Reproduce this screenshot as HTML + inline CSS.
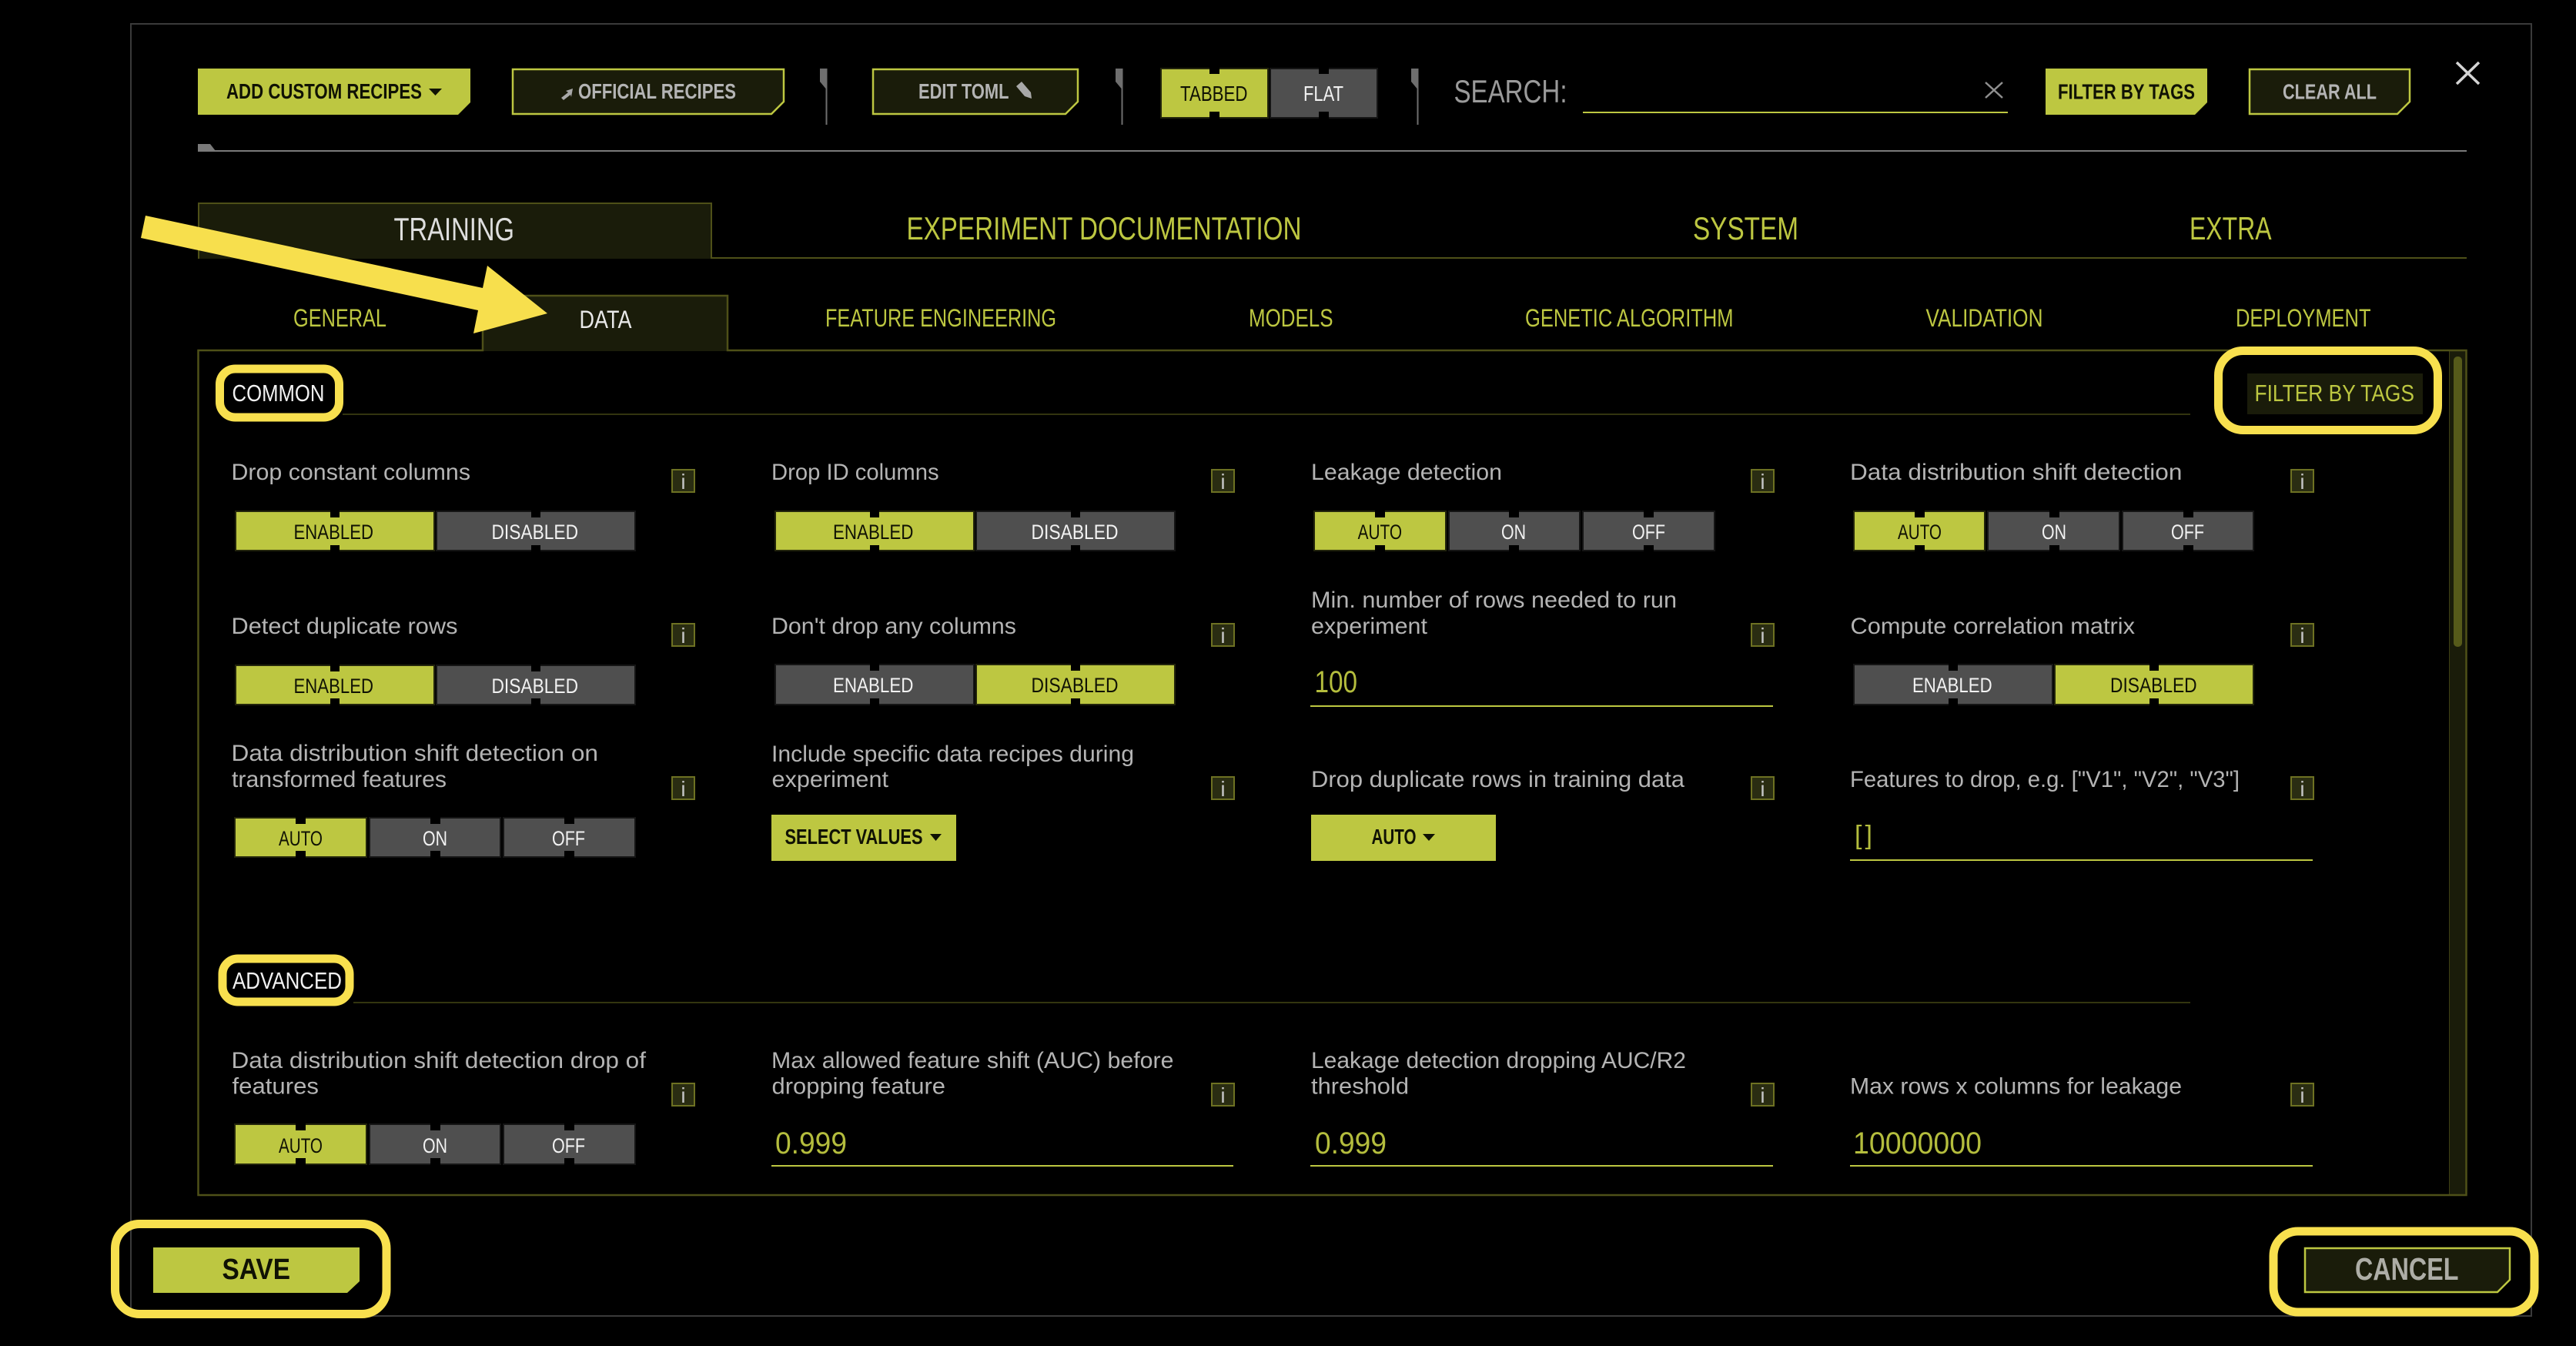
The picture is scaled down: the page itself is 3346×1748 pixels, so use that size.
<!DOCTYPE html>
<html lang="en">
<head>
<meta charset="utf-8">
<title>Expert Settings</title>
<style>
html,body{margin:0;padding:0;background:#000;width:3346px;height:1748px;overflow:hidden}
svg{display:block}
text{font-family:"Liberation Sans",sans-serif;white-space:pre}
.l{font-size:30px;fill:#b4b4b4}
.t{font-size:26.5px}
.k{fill:#101204}
.w{fill:#f2f2f2}
.g{fill:#bdc741}
.b{font-size:27.5px;font-weight:700}
.tab{font-size:42px}
.sub{font-size:32px}
.v{font-size:40px;fill:#b4bd3d}
.i{font-size:28px;fill:#c4c4c4;text-anchor:middle}
.on{fill:#bdc741;stroke:#23250c;stroke-width:2}
.off{fill:#4f4f4f;stroke:#151515;stroke-width:2}
.n{fill:#000}
.info{fill:#2a2d12;stroke:#6d7122;stroke-width:2}
.hl{fill:none;stroke:#f8e04e;stroke-width:11}
.ul{fill:#bdc741}
</style>
</head>
<body>
<svg width="3346" height="1748" viewBox="0 0 3346 1748" xmlns="http://www.w3.org/2000/svg">
<rect width="3346" height="1748" fill="#000"/>
<!-- outer frame -->
<rect x="170" y="31" width="3118" height="1678" fill="none" stroke="#3a3a3a" stroke-width="2"/>

<!-- toolbar -->
<polygon points="257,89 611,89 611,133 595,149 257,149" fill="#bdc741"/>
<text class="b k" x="294" y="128" textLength="254" lengthAdjust="spacingAndGlyphs">ADD CUSTOM RECIPES</text>
<polygon points="557,115 574,115 565.500,124" fill="#101204"/>

<polygon points="666,90 1018,90 1018,132 1002,148 666,148" fill="#1a1c0a" stroke="#bdc741" stroke-width="2.500"/>
<polygon points="744,115 735,118 738,120 729,127 732,130 741,123 742,126" fill="#a8a8a8"/>
<text class="b" fill="#b4b4b4" x="751" y="128" textLength="205" lengthAdjust="spacingAndGlyphs">OFFICIAL RECIPES</text>

<polygon points="1065,89 1074.500,89 1074.500,162 1072.500,162 1072.500,115 1065,106" fill="#6e6e6e"/>

<polygon points="1134,90 1400,90 1400,132 1384,148 1134,148" fill="#1a1c0a" stroke="#bdc741" stroke-width="2.500"/>
<text class="b" fill="#b4b4b4" x="1193" y="128" textLength="117.500" lengthAdjust="spacingAndGlyphs">EDIT TOML</text>
<polygon points="1320,112 1327,106 1339,120 1340,128 1331,125" fill="#a8a8a8"/>

<polygon points="1449,89 1458.500,89 1458.500,162 1456.500,162 1456.500,115 1449,106" fill="#6e6e6e"/>

<rect class="on" x="1508" y="89" width="139" height="64"/>
<rect class="off" x="1650" y="89" width="139" height="64"/>
<rect class="n" x="1571" y="88" width="13" height="8"/>
<rect class="n" x="1571" y="145" width="13" height="9"/>
<rect class="n" x="1713" y="88" width="13" height="8"/>
<rect class="n" x="1713" y="145" width="13" height="9"/>
<text class="t k" style="font-size:27.500px" x="1533" y="131" textLength="87.500" lengthAdjust="spacingAndGlyphs">TABBED</text>
<text class="t w" style="font-size:27.500px" x="1693" y="131" textLength="52" lengthAdjust="spacingAndGlyphs">FLAT</text>

<polygon points="1833,89 1842.500,89 1842.500,162 1840.500,162 1840.500,115 1833,106" fill="#6e6e6e"/>

<text class="tab" fill="#9a9a9a" x="1888.500" y="133" textLength="147" lengthAdjust="spacingAndGlyphs">SEARCH:</text>
<rect class="ul" x="2056" y="145" width="552" height="2"/>
<path d="M2579 107 L2601 127 M2601 107 L2579 127" stroke="#8f8f8f" stroke-width="2.500" fill="none"/>

<polygon points="2657,89 2867,89 2867,133 2851,149 2657,149" fill="#bdc741"/>
<text class="b k" x="2673" y="128.500" textLength="178" lengthAdjust="spacingAndGlyphs">FILTER BY TAGS</text>

<polygon points="2922,90 3130,90 3130,132 3114,148 2922,148" fill="#1a1c0a" stroke="#bdc741" stroke-width="2.500"/>
<text class="b" fill="#b4b4b4" x="2965" y="128.500" textLength="122" lengthAdjust="spacingAndGlyphs">CLEAR ALL</text>

<path d="M3191 81 L3220 109 M3220 81 L3191 109" stroke="#d4d4d4" stroke-width="3.500" fill="none"/>

<rect x="257" y="195" width="2947" height="2" fill="#7a7a7a"/>
<polygon points="257,187 273,187 280,196 257,196" fill="#7a7a7a"/>

<!-- main tabs -->
<rect x="258" y="264" width="666" height="72" fill="#1a1c0a"/>
<path d="M258 336 V264 H924 V335 H3204" fill="none" stroke="#4e5018" stroke-width="2"/>
<text class="tab" fill="#dedede" x="511.500" y="312" textLength="156.500" lengthAdjust="spacingAndGlyphs">TRAINING</text>
<text class="tab g" x="1177.500" y="311" textLength="513" lengthAdjust="spacingAndGlyphs">EXPERIMENT DOCUMENTATION</text>
<text class="tab g" x="2199" y="311" textLength="137" lengthAdjust="spacingAndGlyphs">SYSTEM</text>
<text class="tab g" x="2844" y="311" textLength="106.500" lengthAdjust="spacingAndGlyphs">EXTRA</text>

<!-- sub tabs -->
<rect x="627" y="384" width="318" height="72" fill="#1a1c0a"/>
<text class="sub g" x="381" y="424" textLength="121" lengthAdjust="spacingAndGlyphs">GENERAL</text>
<text class="sub" fill="#e8e8e8" x="752.500" y="426" textLength="68" lengthAdjust="spacingAndGlyphs">DATA</text>
<text class="sub g" x="1072" y="424" textLength="300" lengthAdjust="spacingAndGlyphs">FEATURE ENGINEERING</text>
<text class="sub g" x="1622" y="424" textLength="109.500" lengthAdjust="spacingAndGlyphs">MODELS</text>
<text class="sub g" x="1981" y="424" textLength="270.500" lengthAdjust="spacingAndGlyphs">GENETIC ALGORITHM</text>
<text class="sub g" x="2501.500" y="424" textLength="152" lengthAdjust="spacingAndGlyphs">VALIDATION</text>
<text class="sub g" x="2904" y="424" textLength="175.500" lengthAdjust="spacingAndGlyphs">DEPLOYMENT</text>

<!-- panel -->
<rect x="3181" y="456" width="22" height="1096" fill="#1a1c0a"/>
<rect x="3181" y="456" width="1" height="1096" fill="#3c3e14"/>
<rect x="3187" y="463" width="11" height="377" rx="5" fill="#565a1a"/>
<path d="M257.500 1552 V455 H627 V384 H945 V455 H3203.500 V1552 Z" fill="none" stroke="#4e5018" stroke-width="2.500"/>

<!-- section lines -->
<rect x="445" y="537" width="2400" height="2" fill="#33350f"/>
<rect x="459" y="1301" width="2386" height="2" fill="#33350f"/>

<text class="sub w" style="font-size:31px" x="301.500" y="521" textLength="120" lengthAdjust="spacingAndGlyphs">COMMON</text>
<text class="sub w" style="font-size:31px" x="302" y="1284" textLength="142" lengthAdjust="spacingAndGlyphs">ADVANCED</text>

<rect x="2919" y="485" width="228" height="53" fill="#1a1c0a"/>
<text class="sub g" style="font-size:31px" x="2928.500" y="521" textLength="207.500" lengthAdjust="spacingAndGlyphs">FILTER BY TAGS</text>

<!-- row 1 -->
<text class="l" x="300.500" y="623" textLength="310.500" lengthAdjust="spacingAndGlyphs">Drop constant columns</text>
<text class="l" x="1002" y="623" textLength="217.600" lengthAdjust="spacingAndGlyphs">Drop ID columns</text>
<text class="l" x="1703" y="623" textLength="248" lengthAdjust="spacingAndGlyphs">Leakage detection</text>
<text class="l" x="2403" y="623" textLength="431.400" lengthAdjust="spacingAndGlyphs">Data distribution shift detection</text>

<!-- row 1 toggles -->
<rect class="on" x="306" y="664" width="258" height="51"/><rect class="off" x="567" y="664" width="258" height="51"/>
<rect class="n" x="429" y="663" width="12" height="9"/><rect class="n" x="429" y="708" width="12" height="8"/>
<rect class="n" x="690" y="663" width="12" height="9"/><rect class="n" x="690" y="708" width="12" height="8"/>
<text class="t k" x="381.500" y="700" textLength="103.500" lengthAdjust="spacingAndGlyphs">ENABLED</text>
<text class="t w" x="638.500" y="700" textLength="112.500" lengthAdjust="spacingAndGlyphs">DISABLED</text>

<rect class="on" x="1007" y="664" width="258" height="51"/><rect class="off" x="1268" y="664" width="258" height="51"/>
<rect class="n" x="1130" y="663" width="12" height="9"/><rect class="n" x="1130" y="708" width="12" height="8"/>
<rect class="n" x="1391" y="663" width="12" height="9"/><rect class="n" x="1391" y="708" width="12" height="8"/>
<text class="t k" x="1082" y="700" textLength="104.400" lengthAdjust="spacingAndGlyphs">ENABLED</text>
<text class="t w" x="1339.500" y="700" textLength="113" lengthAdjust="spacingAndGlyphs">DISABLED</text>

<rect class="on" x="1707" y="664" width="171" height="51"/><rect class="off" x="1882" y="664" width="170" height="51"/><rect class="off" x="2056" y="664" width="171" height="51"/>
<rect class="n" x="1786" y="663" width="13" height="9"/><rect class="n" x="1786" y="708" width="13" height="8"/>
<rect class="n" x="1960" y="663" width="13" height="9"/><rect class="n" x="1960" y="708" width="13" height="8"/>
<rect class="n" x="2135" y="663" width="13" height="9"/><rect class="n" x="2135" y="708" width="13" height="8"/>
<text class="t k" x="1763.600" y="700" textLength="57.400" lengthAdjust="spacingAndGlyphs">AUTO</text>
<text class="t w" x="1950" y="700" textLength="32" lengthAdjust="spacingAndGlyphs">ON</text>
<text class="t w" x="2120" y="700" textLength="43" lengthAdjust="spacingAndGlyphs">OFF</text>

<rect class="on" x="2408" y="664" width="170" height="51"/><rect class="off" x="2582" y="664" width="171" height="51"/><rect class="off" x="2757" y="664" width="170" height="51"/>
<rect class="n" x="2487" y="663" width="13" height="9"/><rect class="n" x="2487" y="708" width="13" height="8"/>
<rect class="n" x="2662" y="663" width="13" height="9"/><rect class="n" x="2662" y="708" width="13" height="8"/>
<rect class="n" x="2836" y="663" width="13" height="9"/><rect class="n" x="2836" y="708" width="13" height="8"/>
<text class="t k" x="2465" y="700" textLength="57" lengthAdjust="spacingAndGlyphs">AUTO</text>
<text class="t w" x="2652" y="700" textLength="32" lengthAdjust="spacingAndGlyphs">ON</text>
<text class="t w" x="2820" y="700" textLength="43" lengthAdjust="spacingAndGlyphs">OFF</text>

<!-- row 2 -->
<text class="l" x="300.500" y="823" textLength="294" lengthAdjust="spacingAndGlyphs">Detect duplicate rows</text>
<text class="l" x="1002" y="823" textLength="318" lengthAdjust="spacingAndGlyphs">Don't drop any columns</text>
<text class="l" x="1703" y="789" textLength="475" lengthAdjust="spacingAndGlyphs">Min. number of rows needed to run</text>
<text class="l" x="1703" y="823" textLength="151" lengthAdjust="spacingAndGlyphs">experiment</text>
<text class="l" x="2403.500" y="823" textLength="369.500" lengthAdjust="spacingAndGlyphs">Compute correlation matrix</text>

<rect class="on" x="306" y="864" width="258" height="51"/><rect class="off" x="567" y="864" width="258" height="51"/>
<rect class="n" x="429" y="863" width="12" height="9"/><rect class="n" x="429" y="907" width="12" height="9"/>
<rect class="n" x="690" y="863" width="12" height="9"/><rect class="n" x="690" y="907" width="12" height="9"/>
<text class="t k" x="381.500" y="900" textLength="103.500" lengthAdjust="spacingAndGlyphs">ENABLED</text>
<text class="t w" x="638.500" y="900" textLength="112.500" lengthAdjust="spacingAndGlyphs">DISABLED</text>

<rect class="off" x="1007" y="863" width="258" height="52"/><rect class="on" x="1268" y="863" width="258" height="52"/>
<rect class="n" x="1130" y="862" width="12" height="9"/><rect class="n" x="1130" y="907" width="12" height="9"/>
<rect class="n" x="1391" y="862" width="12" height="9"/><rect class="n" x="1391" y="907" width="12" height="9"/>
<text class="t w" x="1082" y="899" textLength="104.400" lengthAdjust="spacingAndGlyphs">ENABLED</text>
<text class="t k" x="1339.500" y="899" textLength="113" lengthAdjust="spacingAndGlyphs">DISABLED</text>

<text class="v" x="1707.500" y="899" textLength="55.500" lengthAdjust="spacingAndGlyphs">100</text>
<rect class="ul" x="1702" y="916" width="601" height="2"/>

<rect class="off" x="2408" y="863" width="258" height="52"/><rect class="on" x="2669" y="863" width="258" height="52"/>
<rect class="n" x="2531" y="862" width="12" height="9"/><rect class="n" x="2531" y="907" width="12" height="9"/>
<rect class="n" x="2792" y="862" width="12" height="9"/><rect class="n" x="2792" y="907" width="12" height="9"/>
<text class="t w" x="2484" y="899" textLength="103.600" lengthAdjust="spacingAndGlyphs">ENABLED</text>
<text class="t k" x="2741" y="899" textLength="112.600" lengthAdjust="spacingAndGlyphs">DISABLED</text>

<!-- row 3 -->
<text class="l" x="300.500" y="988" textLength="476.500" lengthAdjust="spacingAndGlyphs">Data distribution shift detection on</text>
<text class="l" x="301" y="1022" textLength="279" lengthAdjust="spacingAndGlyphs">transformed features</text>
<text class="l" x="1002" y="989" textLength="471" lengthAdjust="spacingAndGlyphs">Include specific data recipes during</text>
<text class="l" x="1002.500" y="1022" textLength="151.500" lengthAdjust="spacingAndGlyphs">experiment</text>
<text class="l" x="1703" y="1022" textLength="485" lengthAdjust="spacingAndGlyphs">Drop duplicate rows in training data</text>
<text class="l" x="2403" y="1022" textLength="506" lengthAdjust="spacingAndGlyphs">Features to drop, e.g. ["V1", "V2", "V3"]</text>

<rect class="on" x="305" y="1062" width="171" height="51"/><rect class="off" x="480" y="1062" width="170" height="51"/><rect class="off" x="654" y="1062" width="171" height="51"/>
<rect class="n" x="384" y="1061" width="13" height="9"/><rect class="n" x="384" y="1105" width="13" height="9"/>
<rect class="n" x="559" y="1061" width="13" height="9"/><rect class="n" x="559" y="1105" width="13" height="9"/>
<rect class="n" x="733" y="1061" width="13" height="9"/><rect class="n" x="733" y="1105" width="13" height="9"/>
<text class="t k" x="362" y="1098" textLength="57" lengthAdjust="spacingAndGlyphs">AUTO</text>
<text class="t w" x="549" y="1098" textLength="32" lengthAdjust="spacingAndGlyphs">ON</text>
<text class="t w" x="717" y="1098" textLength="43" lengthAdjust="spacingAndGlyphs">OFF</text>

<rect x="1002" y="1058" width="240" height="60" fill="#bdc741"/>
<text class="b k" x="1019.500" y="1096" textLength="179" lengthAdjust="spacingAndGlyphs">SELECT VALUES</text>
<polygon points="1208,1083 1223,1083 1215.500,1092" fill="#101204"/>
<rect x="1703" y="1058" width="240" height="60" fill="#bdc741"/>
<text class="b k" x="1781.500" y="1096" textLength="58" lengthAdjust="spacingAndGlyphs">AUTO</text>
<polygon points="1848,1083 1864,1083 1856,1092" fill="#101204"/>

<text class="v" style="font-size:34px" x="2409" y="1096" textLength="23" lengthAdjust="spacing">[]</text>
<rect class="ul" x="2403" y="1116" width="601" height="2"/>

<!-- advanced row -->
<text class="l" x="300.500" y="1387" textLength="538.500" lengthAdjust="spacingAndGlyphs">Data distribution shift detection drop of</text>
<text class="l" x="301.500" y="1420.700" textLength="112.500" lengthAdjust="spacingAndGlyphs">features</text>
<text class="l" x="1002" y="1387" textLength="522.500" lengthAdjust="spacingAndGlyphs">Max allowed feature shift (AUC) before</text>
<text class="l" x="1002.500" y="1420.700" textLength="225.500" lengthAdjust="spacingAndGlyphs">dropping feature</text>
<text class="l" x="1703" y="1387" textLength="487" lengthAdjust="spacingAndGlyphs">Leakage detection dropping AUC/R2</text>
<text class="l" x="1703" y="1420.700" textLength="127" lengthAdjust="spacingAndGlyphs">threshold</text>
<text class="l" x="2403" y="1420.700" textLength="431" lengthAdjust="spacingAndGlyphs">Max rows x columns for leakage</text>

<rect class="on" x="305" y="1460" width="171" height="52"/><rect class="off" x="480" y="1460" width="170" height="52"/><rect class="off" x="654" y="1460" width="171" height="52"/>
<rect class="n" x="384" y="1459" width="13" height="9"/><rect class="n" x="384" y="1504" width="13" height="9"/>
<rect class="n" x="559" y="1459" width="13" height="9"/><rect class="n" x="559" y="1504" width="13" height="9"/>
<rect class="n" x="733" y="1459" width="13" height="9"/><rect class="n" x="733" y="1504" width="13" height="9"/>
<text class="t k" x="362" y="1497" textLength="57" lengthAdjust="spacingAndGlyphs">AUTO</text>
<text class="t w" x="549" y="1497" textLength="32" lengthAdjust="spacingAndGlyphs">ON</text>
<text class="t w" x="717" y="1497" textLength="43" lengthAdjust="spacingAndGlyphs">OFF</text>

<text class="v" x="1007" y="1498" textLength="93" lengthAdjust="spacingAndGlyphs">0.999</text>
<rect class="ul" x="1002" y="1513" width="600" height="2"/>
<text class="v" x="1708" y="1498" textLength="93" lengthAdjust="spacingAndGlyphs">0.999</text>
<rect class="ul" x="1702" y="1513" width="601" height="2"/>
<text class="v" x="2407" y="1498" textLength="167" lengthAdjust="spacingAndGlyphs">10000000</text>
<rect class="ul" x="2403" y="1513" width="601" height="2"/>

<!-- info icons -->
<rect class="info" x="873" y="610" width="29" height="29"/><text class="i" x="887.500" y="635">i</text>
<rect class="info" x="1574" y="610" width="29" height="29"/><text class="i" x="1588.500" y="635">i</text>
<rect class="info" x="2275" y="610" width="29" height="29"/><text class="i" x="2289.500" y="635">i</text>
<rect class="info" x="2976" y="610" width="29" height="29"/><text class="i" x="2990.500" y="635">i</text>
<rect class="info" x="873" y="810" width="29" height="29"/><text class="i" x="887.500" y="835">i</text>
<rect class="info" x="1574" y="810" width="29" height="29"/><text class="i" x="1588.500" y="835">i</text>
<rect class="info" x="2275" y="810" width="29" height="29"/><text class="i" x="2289.500" y="835">i</text>
<rect class="info" x="2976" y="810" width="29" height="29"/><text class="i" x="2990.500" y="835">i</text>
<rect class="info" x="873" y="1009" width="29" height="29"/><text class="i" x="887.500" y="1034">i</text>
<rect class="info" x="1574" y="1009" width="29" height="29"/><text class="i" x="1588.500" y="1034">i</text>
<rect class="info" x="2275" y="1009" width="29" height="29"/><text class="i" x="2289.500" y="1034">i</text>
<rect class="info" x="2976" y="1009" width="29" height="29"/><text class="i" x="2990.500" y="1034">i</text>
<rect class="info" x="873" y="1407" width="29" height="29"/><text class="i" x="887.500" y="1432">i</text>
<rect class="info" x="1574" y="1407" width="29" height="29"/><text class="i" x="1588.500" y="1432">i</text>
<rect class="info" x="2275" y="1407" width="29" height="29"/><text class="i" x="2289.500" y="1432">i</text>
<rect class="info" x="2976" y="1407" width="29" height="29"/><text class="i" x="2990.500" y="1432">i</text>

<!-- save / cancel -->
<polygon points="199,1620 467,1620 467,1664 451,1679 199,1679" fill="#bdc741"/>
<text class="k" style="font-size:38px;font-weight:700" x="288.500" y="1661" textLength="88.500" lengthAdjust="spacingAndGlyphs">SAVE</text>
<polygon points="2994,1621 3260,1621 3260,1662 3244,1678 2994,1678" fill="#1a1c0a" stroke="#bdc741" stroke-width="2.500"/>
<text fill="#adada6" style="font-size:41px;font-weight:700" x="3059" y="1662" textLength="134.500" lengthAdjust="spacingAndGlyphs">CANCEL</text>

<!-- highlights -->
<rect class="hl" x="285.500" y="479" width="155" height="63" rx="20"/>
<rect class="hl" x="289" y="1245" width="165" height="56" rx="20"/>
<rect class="hl" x="2881.500" y="455.500" width="285" height="103" rx="32"/>
<rect class="hl" x="149.500" y="1589.500" width="352.500" height="117" rx="32"/>
<rect class="hl" x="2953" y="1599" width="339" height="105" rx="32"/>

<!-- arrow -->
<polygon points="189,280 627,374 633,345 711,407 615,433 621,403 183,309" fill="#f7df4d"/>
</svg>
</body>
</html>
